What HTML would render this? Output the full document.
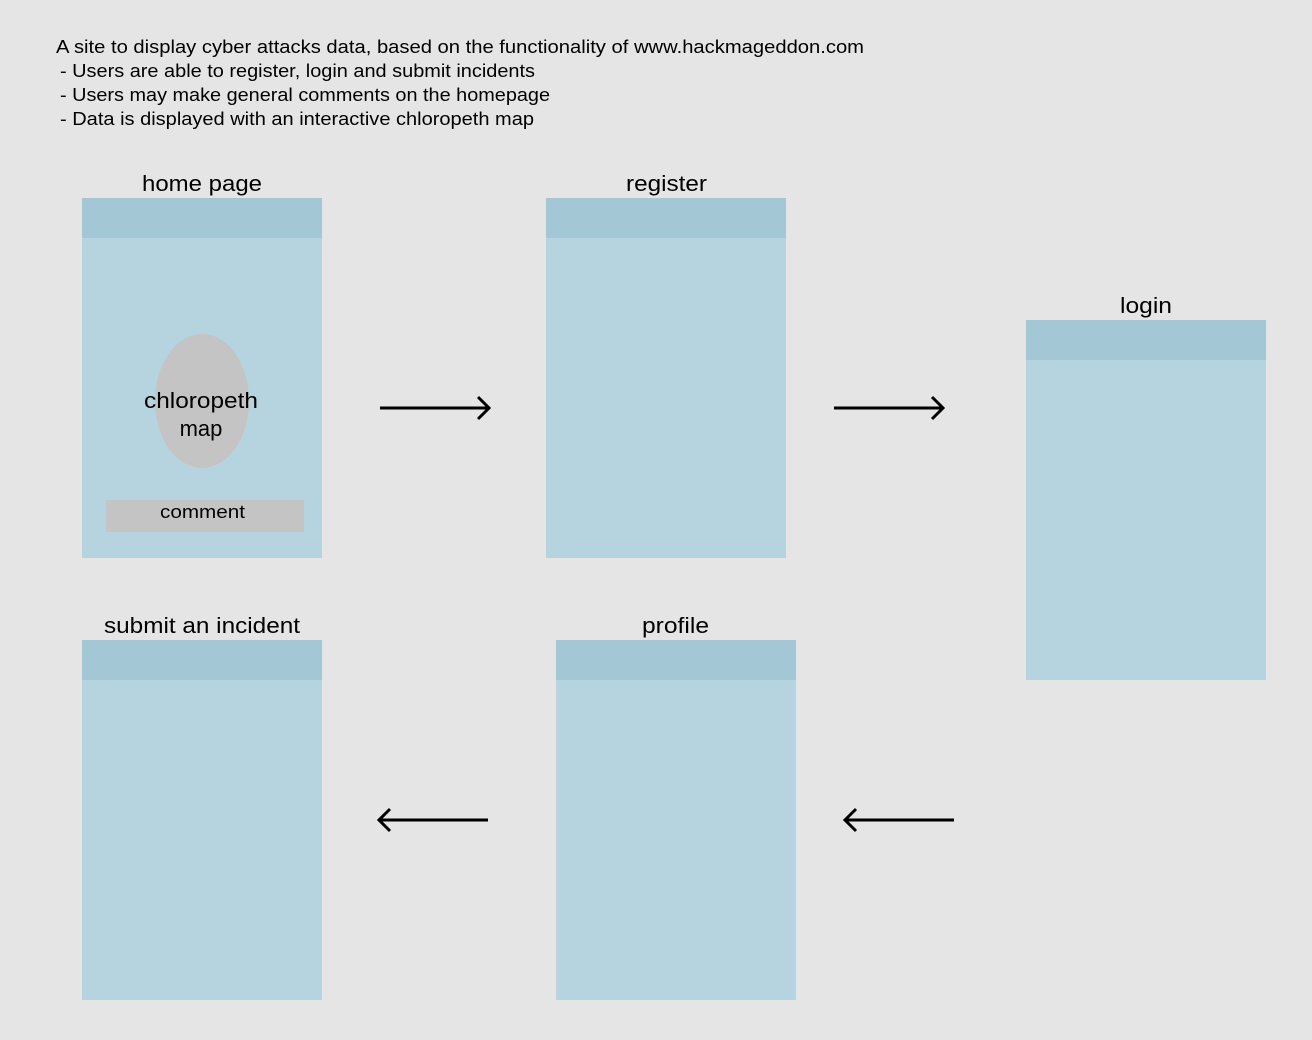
<!DOCTYPE html>
<html><head><style>
html,body{margin:0;padding:0;background:#e5e5e5;}
body{width:1312px;height:1040px;position:relative;overflow:hidden;font-family:"Liberation Sans",sans-serif;}
.b{position:absolute;width:240px;height:360px;background:#b5d4df;}
.b::before{content:"";position:absolute;left:0;top:0;width:100%;height:40px;background:#a3c7d5;}
</style></head><body>
<div class="b" style="left:82px;top:198px"></div>
<div class="b" style="left:546px;top:198px"></div>
<div class="b" style="left:1026px;top:320px"></div>
<div class="b" style="left:82px;top:640px"></div>
<div class="b" style="left:556px;top:640px"></div>
<svg width="1312" height="1040" style="position:absolute;left:0;top:0" font-family="Liberation Sans, sans-serif" fill="#000">
<g font-size="18">
<text x="56" y="53" textLength="808" lengthAdjust="spacingAndGlyphs">A site to display cyber attacks data, based on the functionality of www.hackmageddon.com</text>
<text x="60" y="77" textLength="475" lengthAdjust="spacingAndGlyphs">- Users are able to register, login and submit incidents</text>
<text x="60" y="101" textLength="490" lengthAdjust="spacingAndGlyphs">- Users may make general comments on the homepage</text>
<text x="60" y="125" textLength="474" lengthAdjust="spacingAndGlyphs">- Data is displayed with an interactive chloropeth map</text>
</g>
<g font-size="22" lengthAdjust="spacingAndGlyphs">
<text x="142" y="191" textLength="120" lengthAdjust="spacingAndGlyphs">home page</text>
<text x="626" y="191" textLength="81" lengthAdjust="spacingAndGlyphs">register</text>
<text x="1120" y="313" textLength="52" lengthAdjust="spacingAndGlyphs">login</text>
<text x="104" y="633" textLength="196" lengthAdjust="spacingAndGlyphs">submit an incident</text>
<text x="642" y="633" textLength="67" lengthAdjust="spacingAndGlyphs">profile</text>
</g>
<ellipse cx="202" cy="401" rx="47" ry="67" fill="#c4c4c4"/>
<rect x="106" y="500" width="198" height="32" fill="#c4c4c4"/>
<g font-size="22">
<text x="144" y="408" textLength="114" lengthAdjust="spacingAndGlyphs">chloropeth</text>
<text x="201" y="436" text-anchor="middle">map</text>
</g>
<text x="160" y="518" font-size="18" textLength="85" lengthAdjust="spacingAndGlyphs">comment</text>
<g stroke="#000" stroke-width="3" fill="none">
<path d="M380 408H488M478 397L489 408L478 419"/>
<path d="M834 408H942M932 397L943 408L932 419"/>
<path d="M488 820H380M390 809L379 820L390 831"/>
<path d="M954 820H846M856 809L845 820L856 831"/>
</g>
</svg>
</body></html>
